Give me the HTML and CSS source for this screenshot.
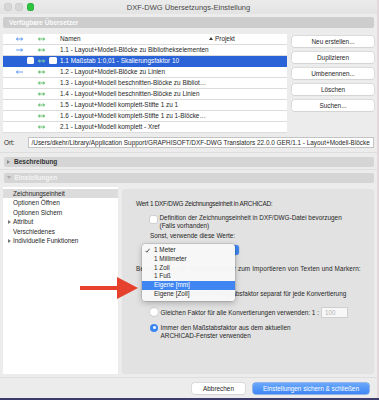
FILE: index.html
```html
<!DOCTYPE html>
<html lang="de">
<head>
<meta charset="utf-8">
<title>DXF-DWG Übersetzungs-Einstellung</title>
<link rel="stylesheet" href="styles.css">
</head>
<body>
<div class="window">
  <div class="titlebar">
    <div class="lights"><span class="light"></span><span class="light"></span><span class="light green"></span></div>
    <div class="title">DXF-DWG Übersetzungs-Einstellung</div>
    <div></div>
  </div>

  <div class="bar bar-main">Verfügbare Übersetzer</div>

  <div class="translators">
    <div class="list">
      <div class="row head">
        <span class="a1"><svg class="ic blue" viewBox="0 0 7 4"><path d="M0.5 2H6.5M2 0.6L0.5 2L2 3.4M5 0.6L6.5 2L5 3.4"/></svg></span>
        <span class="a2"><svg class="ic green" viewBox="0 0 7 4"><path d="M0.5 2H6.5M2 0.6L0.5 2L2 3.4M5 0.6L6.5 2L5 3.4"/></svg></span>
        <span class="name">Namen</span>
        <span class="proj"><svg class="tri-up" viewBox="0 0 4 3"><path d="M0 3L2 0L4 3Z"/></svg>Projekt</span>
      </div>
      <div class="row">
        <span class="a1"><svg class="ic blue" viewBox="0 0 7 4"><path d="M0.5 2H6.5M5 0.6L6.5 2L5 3.4"/></svg></span>
        <span class="a2"><svg class="ic green" viewBox="0 0 7 4"><path d="M0.5 2H6.5M2 0.6L0.5 2L2 3.4M5 0.6L6.5 2L5 3.4"/></svg></span>
        <span class="name">1.1 - Layout+Modell-Blöcke zu Bibliothekselementen</span>
      </div>
      <div class="row selected">
        <span class="a1 end"><span class="sq"></span></span>
        <span class="a2"><svg class="ic lgreen" viewBox="0 0 7 4"><path d="M0.5 2H6.5M2 0.6L0.5 2L2 3.4M5 0.6L6.5 2L5 3.4"/></svg></span>
        <span class="sq sq2"></span>
        <span class="name tight">1.1 Maßstab 1:0,01 - Skalierungsfaktor 10</span>
      </div>
      <div class="row">
        <span class="a1"><svg class="ic blue" viewBox="0 0 7 4"><path d="M0.5 2H6.5M2 0.6L0.5 2L2 3.4"/></svg></span>
        <span class="a2"><svg class="ic green" viewBox="0 0 7 4"><path d="M0.5 2H6.5M2 0.6L0.5 2L2 3.4M5 0.6L6.5 2L5 3.4"/></svg></span>
        <span class="name">1.2 - Layout+Modell-Blöcke zu Linien</span>
      </div>
      <div class="row">
        <span class="a1"></span>
        <span class="a2"><svg class="ic green" viewBox="0 0 7 4"><path d="M0.5 2H6.5M2 0.6L0.5 2L2 3.4M5 0.6L6.5 2L5 3.4"/></svg></span>
        <span class="name">1.3 - Layout+Modell beschnitten-Blöcke zu Bibliot…</span>
      </div>
      <div class="row">
        <span class="a1"></span>
        <span class="a2"><svg class="ic green" viewBox="0 0 7 4"><path d="M0.5 2H6.5M2 0.6L0.5 2L2 3.4M5 0.6L6.5 2L5 3.4"/></svg></span>
        <span class="name">1.4 - Layout+Modell beschnitten-Blöcke zu Linien</span>
      </div>
      <div class="row">
        <span class="a1"></span>
        <span class="a2"><svg class="ic green" viewBox="0 0 7 4"><path d="M0.5 2H6.5M2 0.6L0.5 2L2 3.4M5 0.6L6.5 2L5 3.4"/></svg></span>
        <span class="name">1.5 - Layout+Modell komplett-Stifte 1 zu 1</span>
      </div>
      <div class="row">
        <span class="a1"></span>
        <span class="a2"><svg class="ic green" viewBox="0 0 7 4"><path d="M0.5 2H6.5M2 0.6L0.5 2L2 3.4M5 0.6L6.5 2L5 3.4"/></svg></span>
        <span class="name">1.6 - Layout+Modell komplett-Stifte 1 zu 1-Blöcke…</span>
      </div>
      <div class="row">
        <span class="a1"></span>
        <span class="a2"><svg class="ic green" viewBox="0 0 7 4"><path d="M0.5 2H6.5M2 0.6L0.5 2L2 3.4M5 0.6L6.5 2L5 3.4"/></svg></span>
        <span class="name">2.1 - Layout+Modell komplett - Xref</span>
      </div>
    </div>
    <div class="buttons">
      <div class="btn">Neu erstellen...</div>
      <div class="btn">Duplizieren</div>
      <div class="btn">Umbenennen...</div>
      <div class="btn">Löschen</div>
      <div class="btn">Suchen...</div>
    </div>
  </div>

  <div class="ort">
    <span class="ort-label">Ort:</span>
    <div class="field">/Users/dkehr/Library/Application Support/GRAPHISOFT/DXF-DWG Translators 22.0.0 GER/1.1 - Layout+Modell-Blöcke</div>
  </div>

  <div class="sep"></div>
  <div class="bar bar-dark"><svg class="tri" viewBox="0 0 3 4"><path d="M0 0L3 2L0 4Z"/></svg>Beschreibung</div>
  <div class="sep sep2"></div>
  <div class="bar bar-light"><svg class="tri tri-down" viewBox="0 0 4 3"><path d="M0 0L4 0L2 3Z"/></svg>Einstellungen</div>

  <div class="settings">
    <div class="tree">
      <div class="item sel">Zeichnungseinheit</div>
      <div class="item">Optionen Öffnen</div>
      <div class="item">Optionen Sichern</div>
      <div class="item"><svg class="ttri" viewBox="0 0 3 4"><path d="M0 0L3 2L0 4Z"/></svg>Attribut</div>
      <div class="item">Verschiedenes</div>
      <div class="item"><svg class="ttri" viewBox="0 0 3 4"><path d="M0 0L3 2L0 4Z"/></svg>Individuelle Funktionen</div>
    </div>
    <div class="panel">
      <div class="p-line first">Wert 1 DXF/DWG Zeichnungseinheit in ARCHICAD:</div>
      <div class="check-row">
        <span class="checkbox"></span>
        <span class="check-text">Definition der Zeichnungseinheit in DXF/DWG-Datei bevorzugen<br>(Falls vorhanden)</span>
      </div>
      <div class="p-line indent sonst">Sonst, verwende diese Werte:</div>
      <div class="popup"><span class="popup-label">1 Meter</span><span class="popup-end"></span></div>
      <div class="p-line bestimme">Benutzen Sie den Maßstabsfaktor zum Importieren von Texten und Markern:</div>
      <div class="radio-row r1"><span class="radio"></span><span>Abfrage nach dem Maßstabsfaktor separat für jede Konvertierung</span></div>
      <div class="radio-row r2"><span class="radio"></span><span>Gleichen Faktor für alle Konvertierungen verwenden: 1 :</span><span class="num">100</span></div>
      <div class="radio-row r3"><span class="radio on"></span><span>Immer den Maßstabsfaktor aus dem aktuellen<br>ARCHICAD-Fenster verwenden</span></div>

      <div class="menu">
        <div class="mi"><svg class="check" viewBox="0 0 5 5"><path d="M0.5 2.8L1.9 4.2L4.5 0.8"/></svg>1 Meter</div>
        <div class="mi">1 Millimeter</div>
        <div class="mi">1 Zoll</div>
        <div class="mi">1 Fuß</div>
        <div class="mi hi">Eigene [mm]</div>
        <div class="mi">Eigene [Zoll]</div>
      </div>
    </div>
  </div>

  <div class="sep sep3"></div>
  <div class="footer">
    <div class="btn fbtn cancel">Abbrechen</div>
    <div class="btn fbtn primary">Einstellungen sichern &amp; schließen</div>
  </div>

  <svg class="red-arrow" viewBox="0 0 58 22"><path d="M0 9H37V0L58 11L37 22V13H0Z"/></svg>
</div>
</body>
</html>
```

FILE: styles.css
```css
* { box-sizing: border-box; }
html, body { margin: 0; padding: 0; }
body {
  width: 379px;
  height: 400px;
  overflow: hidden;
  background: linear-gradient(to bottom, #e4d8dc 398px, #3d3b6b 398px);
  font-family: "Liberation Sans", Arial, sans-serif;
  font-size: 6.4px;
  color: #262626;
}
.window {
  position: relative;
  width: 377px;
  height: 398px;
  background: #ececec;
  display: flex;
  flex-direction: column;
}

/* title bar */
.titlebar {
  height: 14px;
  display: grid;
  grid-template-columns: 1fr auto 1fr;
  align-items: center;
  background: linear-gradient(#ebebeb, #e3e3e3);
}
.lights { display: flex; gap: 3.8px; padding-left: 4.2px; }
.light {
  width: 7.5px; height: 7.5px; border-radius: 50%;
  background: #d6d6d6;
  box-shadow: inset 0 0 0 0.5px #c4c4c4;
}
.light.green { background: #2fc440; box-shadow: inset 0 0 0 0.5px #24a333; }
.title { font-size: 7.5px; color: #4a4a4a; }

/* section bars */
.bar {
  margin: 0 3px;
  height: 10px;
  border-radius: 2px;
  background: #d5d5d5;
  font-weight: bold;
  font-size: 6.5px;
  display: flex;
  align-items: center;
}
.bar-main {
  margin-top: 3px;
  height: 11px;
  background: #cdcdcd;
  color: #fbfbfb;
  padding-left: 6px;
}
.bar-dark { margin-top: 4px; margin-left: 4px; color: #333; padding-left: 3px; }
.bar-light { margin-top: 3px; margin-left: 4px; color: #f4f4f4; padding-left: 3px; }
.tri { width: 3px; height: 4px; fill: #8a8a8a; margin-right: 4px; }
.tri-down { width: 4px; height: 3px; fill: #ababab; margin-right: 3.5px; }

/* translators */
.translators { display: flex; margin-top: 5.5px; }
.list { margin-left: 3px; width: 284px; background: #e2e2e2; }
.row {
  height: 11px;
  display: flex;
  align-items: center;
  background: #fff;
  border-bottom: 1px solid #dcdcdc;
  white-space: nowrap;
}
.a1 { width: 32px; display: flex; justify-content: center; align-items: center; }
.a1.end { justify-content: flex-end; padding-right: 1px; }
.a2 { width: 13px; display: flex; justify-content: center; align-items: center; }
.name { padding-left: 12px; width: 162px; }
.name.tight { padding-left: 3px; }
.proj { display: flex; align-items: center; margin-left: -1px; }
.tri-up { width: 4px; height: 3px; fill: #333; margin-right: 2px; }
.ic { width: 7px; height: 4px; fill: none; stroke-width: 0.8; stroke-linecap: round; stroke-linejoin: round; }
.ic.blue { stroke: #3f86f0; }
.ic.green { stroke: #3fae4a; }
.ic.lgreen { stroke: #9be79b; }
.row.selected { background: #2a62d8; color: #fff; border-bottom-color: #2a62d8; }
.sq { display: block; width: 7px; height: 7px; border-radius: 1.5px; background: #fff; }
.sq2 { margin-left: 1px; width: 8px; }

.buttons {
  margin-left: 5px;
  width: 82px;
  padding-top: 2px;
  display: flex;
  flex-direction: column;
  gap: 5px;
}
.btn {
  height: 11px;
  background: #fff;
  border-radius: 2.5px;
  box-shadow: 0 0 0 0.5px #c9c9c9, 0 0.5px 0.5px rgba(0,0,0,0.12);
  display: flex;
  align-items: center;
  justify-content: center;
  white-space: nowrap;
}

/* Ort */
.ort { display: flex; align-items: center; margin-top: 4px; padding: 0 3px 0 4px; }
.ort-label { width: 24px; }
.field {
  flex: 1;
  height: 11px;
  background: #fff;
  border: 0.5px solid #c3c3c3;
  padding-left: 2.5px;
  display: flex;
  align-items: center;
  white-space: nowrap;
  overflow: hidden;
}

.sep { height: 1px; background: #dedede; margin-top: 4px; }
.sep2 { margin-top: 2px; }
.sep3 { margin-top: 3px; }

/* settings */
.settings { display: flex; margin-top: 4px; height: 187px; }
.tree { margin-left: 3px; width: 115px; background: #fff; padding-top: 2px; }
.item { height: 9.5px; display: flex; align-items: center; padding-left: 10px; white-space: nowrap; }
.item.sel { background: #dcdcdc; }
.ttri { width: 3px; height: 4px; fill: #777; margin-left: -5.5px; margin-right: 2.5px; }

.panel {
  position: relative;
  margin-left: 4px;
  margin-right: 3px;
  margin-top: 2px;
  flex: 1;
  background: #e2e2e2;
  border-radius: 3px;
  padding-left: 14px;
  padding-top: 11px;
}
.p-line { line-height: 8px; white-space: nowrap; }
.p-line.first { letter-spacing: -0.25px; }
.indent { padding-left: 14px; }
.check-row { display: flex; margin-top: 6px; padding-left: 14px; }
.checkbox {
  width: 7px; height: 7px; margin-top: 2px;
  background: #fff; border-radius: 1.5px;
  box-shadow: 0 0 0 0.5px #bdbdbd;
  flex: none;
}
.check-text { margin-left: 2.5px; line-height: 8px; white-space: nowrap; }
.sonst { margin-top: 2px; }
.popup {
  margin-top: 5px;
  margin-left: 10px;
  width: 93px;
  height: 10px;
  background: #fff;
  border-radius: 2.5px;
  box-shadow: 0 0 0 0.5px #c6c6c6;
  display: flex;
  align-items: center;
}
.popup-label { flex: 1; padding-left: 8px; }
.popup-end { width: 6px; height: 10px; background: #3f86f2; border-radius: 0 2.5px 2.5px 0; }
.bestimme { margin-top: 10px; letter-spacing: 0.12px; }
.radio-row { display: flex; align-items: center; padding-left: 14px; white-space: nowrap; }
.radio-row .radio { margin-right: 2.5px; }
.r1 { margin-top: 17px; height: 8px; }
.r2 { margin-top: 9px; height: 11px; }
.r3 { margin-top: 6px; align-items: flex-start; line-height: 8px; }
.radio {
  width: 8px; height: 8px; border-radius: 50%;
  background: #fff;
  box-shadow: 0 0 0 0.5px #b5b5b5;
  flex: none;
  display: flex; align-items: center; justify-content: center;
}
.radio.on { background: #3b86f5; box-shadow: none; }
.radio.on::after { content: ""; width: 3px; height: 3px; border-radius: 50%; background: #fff; }
.num {
  margin-left: 2px;
  width: 27px;
  height: 11px;
  background: #f7f7f7;
  border: 0.5px solid #cfcfcf;
  color: #b4b4b4;
  padding-left: 3px;
  display: flex;
  align-items: center;
}

/* popup menu overlay */
.menu {
  position: absolute;
  left: 20px;
  top: 55px;
  width: 93px;
  padding: 2.5px 0;
  background: rgba(247,247,247,0.98);
  border-radius: 3.5px;
  box-shadow: 0 0 0 0.5px rgba(0,0,0,0.18), 0 2px 6px rgba(0,0,0,0.25);
}
.mi { height: 8.8px; line-height: 8.8px; padding-left: 12px; position: relative; white-space: nowrap; }
.mi.hi { background: #3f86f2; color: #fff; }
.check { position: absolute; left: 3px; top: 2px; width: 5px; height: 5px; fill: none; stroke: #222; stroke-width: 0.8; }

/* footer */
.footer { display: flex; justify-content: flex-end; gap: 8px; margin-top: 5px; padding-right: 8px; }
.fbtn { height: 11px; }
.cancel { width: 53px; }
.primary {
  width: 116px;
  background: linear-gradient(#6aa8fa, #3f86f4);
  color: #fff;
  box-shadow: 0 0 0 0.5px #3a7ee8;
}

/* annotation arrow */
.red-arrow {
  position: absolute;
  left: 80px;
  top: 277px;
  width: 58px;
  height: 22px;
  fill: #e5412d;
}
```
